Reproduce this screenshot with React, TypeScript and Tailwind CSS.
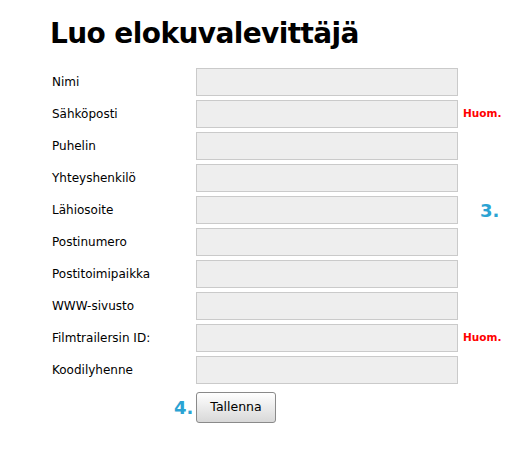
const fields = [
  { label: 'Nimi' },
  { label: 'Sähköposti', note: true },
  { label: 'Puhelin' },
  { label: 'Yhteyshenkilö' },
  { label: 'Lähiosoite', step: '3.' },
  { label: 'Postinumero' },
  { label: 'Postitoimipaikka' },
  { label: 'WWW-sivusto' },
  { label: 'Filmtrailersin ID:', note: true },
  { label: 'Koodilyhenne' },
];

export default function App() {
  return (
    <div className="min-h-[450px] bg-white pl-[50px] pt-[14px] font-['DejaVu_Sans',sans-serif] text-black">
      <h1 className="text-[28px] font-bold leading-[40px] tracking-[-0.6px]">Luo elokuvalevittäjä</h1>

      <form className="mt-[14px] flex flex-col gap-1">
        {fields.map((f) => (
          <div key={f.label} className="flex h-7 items-center">
            <label className="w-[146px] pl-[2px] text-[12px]">{f.label}</label>
            <input
              type="text"
              className="h-7 w-[262px] border border-[#cacaca] bg-[#eeeeee]"
            />
            {f.note && (
              <span className="ml-[5px] text-[10.5px] font-bold text-[#ff0000]">Huom.</span>
            )}
            {f.step && (
              <span className="ml-[22px] text-[18px] font-bold text-[#2ba3d3]">{f.step}</span>
            )}
          </div>
        ))}

        <div className="mt-[4px] flex items-center">
          <span className="ml-[124px] w-[22px] text-[18px] font-bold text-[#2ba3d3]">4.</span>
          <button
            type="button"
            className="h-[31px] w-[80px] rounded-[3px] border border-[#8a8a8a] bg-gradient-to-b from-white to-[#d8d8d8] text-[12.5px]"
          >
            Tallenna
          </button>
        </div>
      </form>
    </div>
  );
}
